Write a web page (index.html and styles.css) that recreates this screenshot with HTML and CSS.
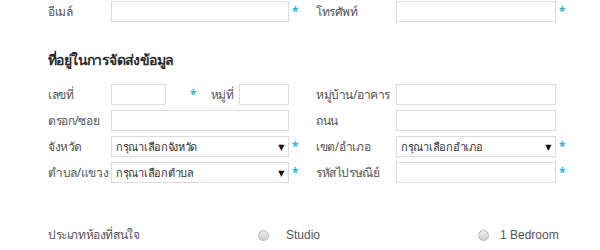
FILE: index.html
```html
<!DOCTYPE html>
<html lang="th">
<head>
<meta charset="utf-8">
<link rel="stylesheet" href="styles.css">
</head>
<body>
<form class="form">
  <div class="row">
    <label class="lbl">อีเมล์</label>
    <input class="inp" type="text">
    <span class="req">*</span>
    <label class="lbl">โทรศัพท์</label>
    <input class="inp" type="text">
    <span class="req">*</span>
  </div>

  <h3 class="heading">ที่อยู่ในการจัดส่งข้อมูล</h3>

  <div class="row">
    <label class="lbl">เลขที่</label>
    <div class="split">
      <input class="inp num" type="text">
      <span class="req mid">*</span>
      <label class="lbl sub">หมู่ที่</label>
      <input class="inp moo" type="text">
    </div>
    <span></span>
    <label class="lbl">หมู่บ้าน/อาคาร</label>
    <input class="inp" type="text">
    <span></span>
  </div>

  <div class="row">
    <label class="lbl">ตรอก/ซอย</label>
    <input class="inp" type="text">
    <span></span>
    <label class="lbl">ถนน</label>
    <input class="inp" type="text">
    <span></span>
  </div>

  <div class="row">
    <label class="lbl">จังหวัด</label>
    <div class="sel"><span>กรุณาเลือกจังหวัด</span><span class="arr">▼</span></div>
    <span class="req">*</span>
    <label class="lbl">เขต/อำเภอ</label>
    <div class="sel"><span>กรุณาเลือกอำเภอ</span><span class="arr">▼</span></div>
    <span class="req">*</span>
  </div>

  <div class="row">
    <label class="lbl">ตำบล/แขวง</label>
    <div class="sel"><span>กรุณาเลือกตำบล</span><span class="arr">▼</span></div>
    <span class="req">*</span>
    <label class="lbl">รหัสไปรษณีย์</label>
    <input class="inp" type="text">
    <span class="req">*</span>
  </div>

  <div class="rooms">
    <span class="lbl">ประเภทห้องที่สนใจ</span>
    <label class="opt studio"><input type="radio" name="room" class="radio"><span>Studio</span></label>
    <label class="opt bed"><input type="radio" name="room" class="radio"><span>1 Bedroom</span></label>
  </div>
</form>
</body>
</html>
```

FILE: styles.css
```css
html, body {
  margin: 0;
  padding: 0;
  background: #fff;
}
body {
  font-family: "Noto Sans", "DejaVu Sans", sans-serif;
  color: #555;
  width: 600px;
  height: 250px;
  overflow: hidden;
}
.form {
  padding: 1px 0 0 48px;
}
.row {
  display: grid;
  grid-template-columns: 63px 178px 27px 80px 160px 20px;
  align-items: center;
  height: 21px;
  margin-bottom: 5px;
}
.lbl {
  font-size: 12px;
  letter-spacing: -0.4px;
  color: #555;
  white-space: nowrap;
  line-height: 20px;
}
.inp {
  box-sizing: border-box;
  height: 21px;
  width: 100%;
  margin: 0;
  padding: 0 4px;
  border: 1px solid #dcdcdc;
  background: #fff;
  outline: none;
}
.req {
  color: #2bb7d6;
  font-size: 12px;
  font-weight: bold;
  padding-left: 3px;
  line-height: 20px;
  letter-spacing: 0;
}
.heading {
  margin: 27px 0 13px;
  font-size: 14px;
  letter-spacing: -0.6px;
  font-weight: bold;
  color: #2a2a2a;
  line-height: 22px;
  height: 22px;
}
.split {
  display: flex;
  align-items: center;
}
.num {
  width: 55px;
}
.req.mid {
  padding-left: 0;
  margin-left: 24px;
}
.sub {
  margin-left: 14px;
}
.moo {
  width: 50px;
  margin-left: auto;
}
.sel {
  box-sizing: border-box;
  height: 21px;
  border: 1px solid #dcdcdc;
  display: flex;
  align-items: center;
  justify-content: space-between;
  padding: 0 4px 0 4px;
  font-size: 11px;
  letter-spacing: -0.3px;
  color: #333;
}
.arr {
  font-size: 8px;
  color: #111;
}
.rooms {
  display: flex;
  align-items: center;
  margin-top: 42px;
  height: 20px;
}
.rooms > .lbl {
  width: 210px;
}
.opt {
  display: flex;
  align-items: center;
  font-family: "Liberation Sans", sans-serif;
  font-size: 12px;
  color: #555;
}
.studio {
  width: 220px;
}
.radio {
  appearance: none;
  -webkit-appearance: none;
  box-sizing: border-box;
  width: 11px;
  height: 11px;
  margin: 0 17px 0 0;
  border-radius: 50%;
  border: 1px solid #b8b8b8;
  background: linear-gradient(#ececec, #d2d2d2);
}
.bed .radio {
  margin-right: 11px;
}
```
